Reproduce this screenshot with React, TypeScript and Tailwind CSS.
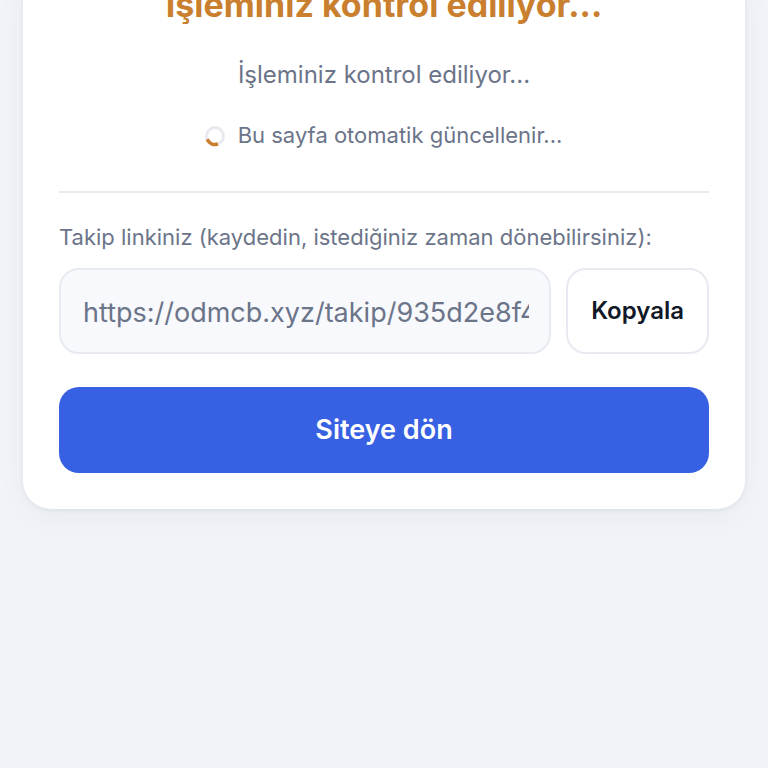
import { useRef, useState } from "react";

export default function App() {
  const inputRef = useRef<HTMLInputElement>(null);
  const [link] = useState("https://odmcb.xyz/takip/935d2e8f4a7c");

  const copyLink = () => {
    inputRef.current?.select();
    navigator.clipboard?.writeText(link);
  };

  return (
    <div className="h-screen overflow-hidden bg-[#f0f4f8] px-[23px] font-['Inter',sans-serif] text-[#6b7489]">
      <main className="-mt-9 rounded-[28px] bg-white px-9 pt-[21px] pb-9 shadow-[0_2px_4px_rgba(15,23,42,0.05),0_8px_32px_rgba(15,23,42,0.04)]">
        <h1 className="text-center text-[34px] leading-10 font-bold text-[#c97f2e]">
          İşleminiz kontrol ediliyor...
        </h1>
        <p className="mt-8 text-center text-2xl leading-9">
          İşleminiz kontrol ediliyor...
        </p>

        {/* Auto refresh status */}
        <div className="mt-6 flex items-center justify-center gap-3 text-[22px] leading-9">
          <svg className="size-5 overflow-visible" viewBox="0 0 20 20" fill="none" strokeWidth="3" aria-hidden="true">
            <circle cx="9" cy="11" r="8.5" stroke="#e8eaf0" />
            <path d="M1.2 14.3A8.5 8.5 0 0 0 11.9 19" stroke="#c97f2e" strokeWidth="3.5" />
          </svg>
          <span>Bu sayfa otomatik güncellenir...</span>
        </div>

        {/* Tracking link */}
        <div className="mt-[38px] border-t-2 border-[#e9ebf0] pt-[26px]">
          <label htmlFor="link" className="block text-[22px] leading-9">
            Takip linkiniz (kaydedin, istediğiniz zaman dönebilirsiniz):
          </label>
          <div className="mt-[13px] flex gap-[15px]">
            <input
              id="link"
              ref={inputRef}
              readOnly
              value={link}
              className="h-[86px] min-w-0 flex-1 rounded-[20px] border-2 border-[#e7eaf1] bg-[#f7f9fc] pt-0.5 pr-5 pl-[22px] text-[27px]"
            />
            <button
              type="button"
              onClick={copyLink}
              className="rounded-[20px] border-2 border-[#e7eaf1] bg-white px-[23px] text-2xl font-semibold text-[#111827]"
            >
              Kopyala
            </button>
          </div>
        </div>

        <a
          href="#"
          className="mt-[33px] block rounded-[20px] bg-[#3761e2] py-6 text-center text-[27px] leading-[38px] font-semibold text-white"
        >
          Siteye dön
        </a>
      </main>
    </div>
  );
}
